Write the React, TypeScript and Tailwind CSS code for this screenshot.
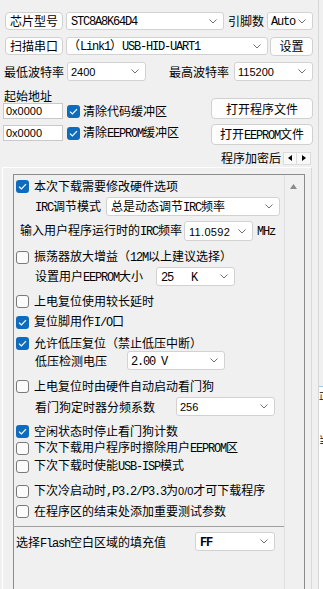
import React from "react";

function L({ children }: { children: React.ReactNode }) {
  return <span className="font-['Liberation_Mono',monospace] text-[12px] tracking-[-1.2px]">{children}</span>;
}

function Chevron() {
  return (
    <svg width="8" height="5" viewBox="0 0 8 5" className="shrink-0">
      <path d="M0.5 0.5L4 4L7.5 0.5" fill="none" stroke="#707070" strokeWidth="1" />
    </svg>
  );
}

function Select({
  className = "",
  textClass = "pl-[4px]",
  children,
}: {
  className?: string;
  textClass?: string;
  children: React.ReactNode;
}) {
  return (
    <div
      className={`flex items-center justify-between shrink-0 bg-white border border-[#d2d2d2] rounded-[3px] pr-[6px] overflow-hidden whitespace-pre ${className}`}
    >
      <span className={`whitespace-pre ${textClass}`}>{children}</span>
      <Chevron />
    </div>
  );
}

function Btn({ className = "", children }: { className?: string; children: React.ReactNode }) {
  return (
    <div
      className={`flex items-center justify-center shrink-0 bg-[#fdfdfd] border border-[#d0d0d0] rounded-[4px] whitespace-nowrap ${className}`}
    >
      <span>{children}</span>
    </div>
  );
}

function Check({ on }: { on: boolean }) {
  if (on) {
    return (
      <span className="flex items-center justify-center w-[13px] h-[13px] rounded-[3px] bg-[#0f6cbd] shrink-0">
        <svg width="9" height="7" viewBox="0 0 9 7">
          <path d="M1 3.6L3.4 6L8 1.2" fill="none" stroke="white" strokeWidth="1.2" />
        </svg>
      </span>
    );
  }
  return <span className="w-[13px] h-[13px] rounded-[3px] border border-[#7a7a7a] bg-[#fbfbfb] shrink-0" />;
}

function CheckRow({ on, className = "", children }: { on: boolean; className?: string; children: React.ReactNode }) {
  return (
    <div className={`flex items-center h-[14px] pl-[2px] whitespace-nowrap ${className}`}>
      <Check on={on} />
      <span className="ml-[5px] whitespace-nowrap">{children}</span>
    </div>
  );
}

const logText = [
  "正在检测目标单片机 ...",
  "  单片机型号: STC8A8K64D4",
  "  固件版本号: 7.4.1U",
  "",
  "当前芯片的硬件选项为:",
  "  . 系统频率为11.059MHz",
  "  . 掉电唤醒定时器的频率: 36.100KHz",
  "  . 低压检测门槛电压 : 2.00 V",
  "  . 上电复位时增加额外的复位延时",
  "  . 复位引脚用作普通I/O口",
  "  . 检测到低压时复位",
  "  . 上电复位时，硬件不启动内部看门狗",
  "  . 预分频数为 : 256",
  "  . 空闲状态时看门狗停止计数",
  "  . 擦除用户EEPROM区",
  "  . 添加重要测试参数",
  "  . TxD脚为准双向口/弱上拉",
  "  . P3.7为准双向口/弱上拉",
].join("\n");

export default function App() {
  return (
    <div className="w-[323px] h-[589px] overflow-hidden bg-[#f0f0f0] flex text-[12px] text-black font-['Noto_Sans_CJK_SC',sans-serif]">
      <div className="w-[318px] shrink-0 flex flex-col pt-[12px]">
        {/* row 1 */}
        <div className="flex items-center h-[18px] pl-[5px]">
          <Btn className="w-[58px] h-[18px]">芯片型号</Btn>
          <Select className="ml-[3px] w-[158px] h-[18px]">
            <L>STC8A8K64D4</L>
          </Select>
          <span className="ml-[4px] w-[38px] whitespace-nowrap">引脚数</span>
          <Select className="ml-[1px] w-[46px] h-[18px]" textClass="pl-[3px]">
            <L>Auto</L>
          </Select>
        </div>

        {/* row 2 */}
        <div className="flex items-center h-[18px] pl-[5px] mt-[7px]">
          <Btn className="w-[58px] h-[18px]">扫描串口</Btn>
          <Select className="ml-[3px] w-[202px] h-[18px]" textClass="pl-[1px]">
            （<L>Link1</L>）<L>USB-HID-UART1</L>
          </Select>
          <Btn className="ml-[2px] w-[43px] h-[19px]">设置</Btn>
        </div>

        {/* row 3 */}
        <div className="flex items-center h-[19px] pl-[4px] mt-[7px]">
          <span className="w-[62px] whitespace-nowrap">最低波特率</span>
          <Select className="ml-[1px] w-[79px] h-[19px]" textClass="pl-[3px]">
            <span className="font-['Liberation_Sans',sans-serif] text-[11px]">2400</span>
          </Select>
          <span className="ml-[23px] w-[60px] whitespace-nowrap">最高波特率</span>
          <Select className="ml-[5px] w-[79px] h-[19px]" textClass="pl-[3px]">
            <span className="font-['Liberation_Sans',sans-serif] text-[11px]">115200</span>
          </Select>
        </div>

        {/* address + file buttons */}
        <div className="flex mt-[7px]">
          <div className="w-[211px] pl-[3px] shrink-0">
            <div className="h-[15px] leading-[15px] pl-[1px]">起始地址</div>
            <div className="flex items-center h-[16px]">
              <div className="w-[60px] h-[16px] bg-white border border-[#c9c9c9] pl-[2px] flex items-center font-['Liberation_Sans',sans-serif] text-[11px]">
                0x0000
              </div>
              <span className="ml-[4px]">
                <Check on />
              </span>
              <span className="ml-[3px] whitespace-nowrap">清除代码缓冲区</span>
            </div>
            <div className="flex items-center h-[16px] mt-[6px]">
              <div className="w-[60px] h-[16px] bg-white border border-[#c9c9c9] pl-[2px] flex items-center font-['Liberation_Sans',sans-serif] text-[11px]">
                0x0000
              </div>
              <span className="ml-[4px]">
                <Check on />
              </span>
              <span className="ml-[3px] whitespace-nowrap">
                清除<L>EEPROM</L>缓冲区
              </span>
            </div>
          </div>
          <div className="w-[102px] pt-[10px] flex flex-col">
            <Btn className="w-[102px] h-[21px]">打开程序文件</Btn>
            <Btn className="w-[102px] h-[21px] mt-[5px]">
              打开<L>EEPROM</L>文件
            </Btn>
          </div>
        </div>

        {/* tab header */}
        <div className="flex items-center h-[18px] mt-[4px]">
          <div className="w-[218px] shrink-0" />
          <div className="w-[65px] overflow-hidden whitespace-nowrap pl-[3px]">程序加密后</div>
          <div className="flex items-center">
            <div className="w-[14px] h-[13px] flex items-center justify-center bg-[#f8f8f8] border border-[#dcdcdc]">
              <svg width="4" height="6" viewBox="0 0 4 6">
                <path d="M4 0L0 3L4 6Z" fill="#000" />
              </svg>
            </div>
            <div className="w-[14px] h-[13px] flex items-center justify-center bg-[#f8f8f8] border border-l-0 border-[#dcdcdc]">
              <svg width="4" height="6" viewBox="0 0 4 6">
                <path d="M0 0L4 3L0 6Z" fill="#000" />
              </svg>
            </div>
          </div>
        </div>

        {/* tab page */}
        <div className="flex-1 ml-[2px] w-[310px] border-l border-t border-r border-l-white border-t-white border-r-[#d9d9d9] pt-[6px] pl-[10px] min-h-0">
          <div className="w-[292px] h-[500px] border border-[#8c8c8c] flex">
            <div className="w-[270px] shrink-0 flex flex-col">
              <CheckRow on className="mt-[4px]">本次下载需要修改硬件选项</CheckRow>

              <div className="flex items-center h-[19px] mt-[4px] pl-[21px]">
                <span className="w-[71px] shrink-0 whitespace-nowrap">
                  <L>IRC</L>调节模式
                </span>
                <Select className="w-[174px] h-[19px]">
                  总是动态调节<L>IRC</L>频率
                </Select>
              </div>

              <div className="flex items-center h-[20px] mt-[5px] pl-[6px]">
                <span className="w-[164px] shrink-0 whitespace-nowrap">
                  输入用户程序运行时的<L>IRC</L>频率
                </span>
                <Select className="w-[69px] h-[20px]">
                  <span className="font-['Liberation_Sans',sans-serif] text-[11px] tracking-[0.3px]">11.0592</span>
                </Select>
                <span className="ml-[4px]">
                  <L>MHz</L>
                </span>
              </div>

              <CheckRow on={false} className="mt-[9px]">
                振荡器放大增益（<L>12M</L>以上建议选择）
              </CheckRow>

              <div className="flex items-center h-[19px] mt-[3px] pl-[21px]">
                <span className="w-[121px] shrink-0 whitespace-nowrap">
                  设置用户<L>EEPROM</L>大小
                </span>
                <Select className="w-[79px] h-[19px]">
                  <L>{"25   K"}</L>
                </Select>
              </div>

              <CheckRow on={false} className="mt-[8px]">上电复位使用较长延时</CheckRow>
              <CheckRow on className="mt-[7px]">
                复位脚用作<L>I/O</L>口
              </CheckRow>
              <CheckRow on className="mt-[7px]">允许低压复位（禁止低压中断）</CheckRow>

              <div className="flex items-center h-[19px] mt-[1px] pl-[21px]">
                <span className="w-[92px] shrink-0 whitespace-nowrap">低压检测电压</span>
                <Select className="w-[98px] h-[19px]" textClass="pl-[3px]">
                  <L>2.00 V</L>
                </Select>
              </div>

              <CheckRow on={false} className="mt-[9px]">上电复位时由硬件自动启动看门狗</CheckRow>

              <div className="flex items-center h-[19px] mt-[4px] pl-[21px]">
                <span className="w-[141px] shrink-0 whitespace-nowrap">看门狗定时器分频系数</span>
                <Select className="w-[99px] h-[19px]" textClass="pl-[3px]">
                  <span className="font-['Liberation_Sans',sans-serif] text-[11px]">256</span>
                </Select>
              </div>

              <CheckRow on className="mt-[8px]">空闲状态时停止看门狗计数</CheckRow>
              <CheckRow on={false} className="mt-[3px]">
                下次下载用户程序时擦除用户<L>EEPROM</L>区
              </CheckRow>
              <CheckRow on={false} className="mt-[4px]">
                下次下载时使能<L>USB-ISP</L>模式
              </CheckRow>
              <CheckRow on={false} className="mt-[11px]">
                下次冷启动时<L>,P3.2/P3.3</L>为<span className="font-['Liberation_Sans',sans-serif] text-[11px]">0/0</span>才可下载程序
              </CheckRow>
              <CheckRow on={false} className="mt-[6px]">在程序区的结束处添加重要测试参数</CheckRow>

              <div className="mt-[8px] border-t border-[#a0a0a0] -ml-px" />

              <div className="flex items-center h-[19px] mt-[5px] pl-[2px]">
                <span className="w-[179px] shrink-0 whitespace-nowrap mt-[2px]">
                  选择<L>Flash</L>空白区域的填充值
                </span>
                <Select className="w-[80px] h-[19px]">
                  <span className="font-['Liberation_Mono',monospace] text-[12px] tracking-[-1.2px] font-bold">FF</span>
                </Select>
              </div>
            </div>
            <div className="w-[20px] border-l border-[#e0e0e0] pt-[9px] pl-[5px]">
              <svg width="7" height="5" viewBox="0 0 7 5">
                <path d="M0 5L3.5 0L7 5Z" fill="#8a8a8a" />
              </svg>
            </div>
          </div>
        </div>
      </div>

      {/* right edge: log window */}
      <div className="w-[5px] border-l border-[#d6d6d6] flex flex-col overflow-hidden">
        <div className="h-[386px] shrink-0" />
        <div className="flex-1 bg-white border-t border-[#9fcbea] pt-[3px] overflow-hidden">
          <div className="text-[9px] leading-[11px] whitespace-pre">{logText}</div>
        </div>
      </div>
    </div>
  );
}
